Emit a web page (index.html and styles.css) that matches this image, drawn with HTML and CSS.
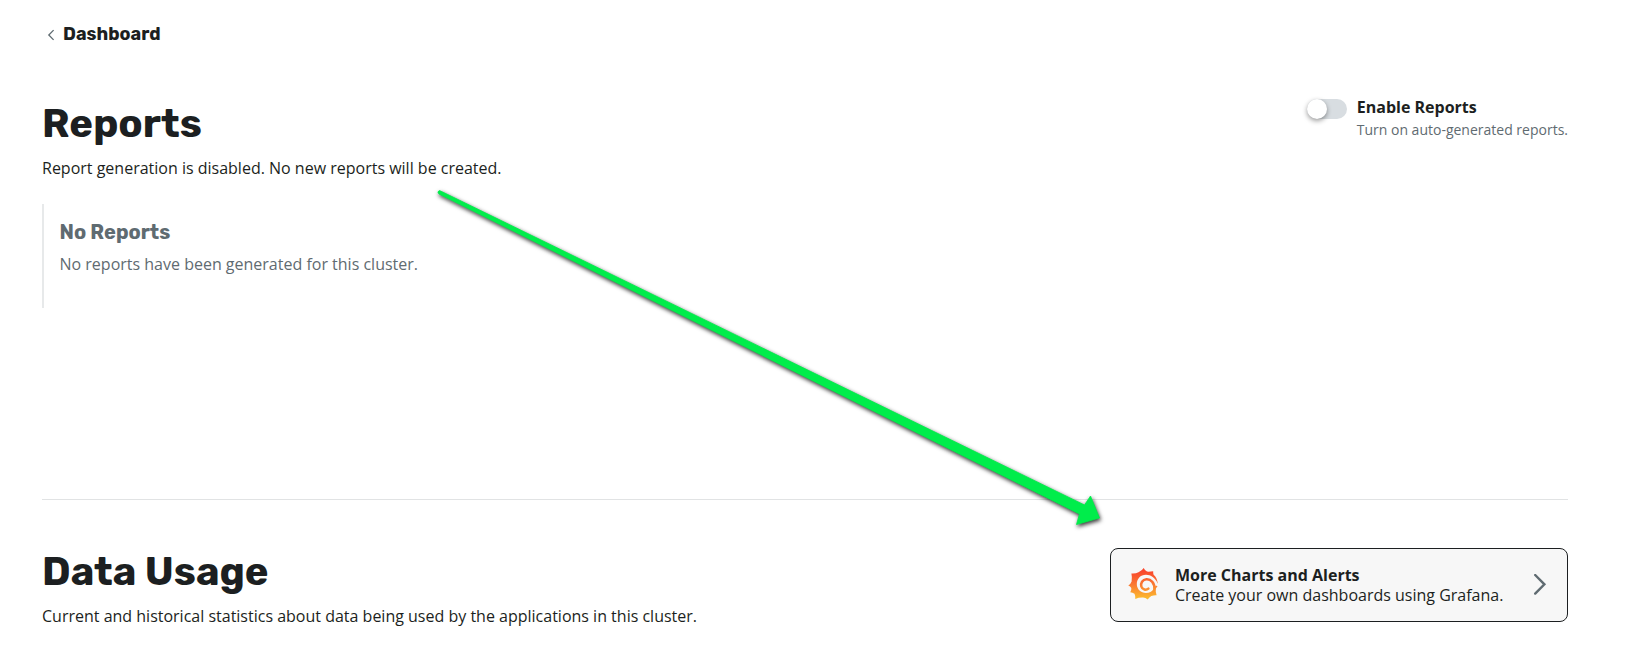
FILE: index.html
```html
<!DOCTYPE html>
<html lang="en">
<head>
<meta charset="utf-8">
<title>Reports</title>
<link rel="stylesheet" href="styles.css">
</head>
<body>
<main class="page">
  <nav class="back">
    <svg class="back-icon" width="8" height="12" viewBox="0 0 8 12"><path d="M6.6 1.1 1.8 6 6.6 10.9"/></svg>
    <a class="back-link">Dashboard</a>
  </nav>
  <section class="reports">
    <header class="row">
      <div>
        <h1 class="title title-reports">Reports</h1>
        <p class="text">Report generation is disabled. No new reports will be created.</p>
      </div>
      <div class="setting">
        <span class="toggle"><span class="knob"></span></span>
        <div>
          <div class="setting-name">Enable Reports</div>
          <div class="setting-help">Turn on auto-generated reports.</div>
        </div>
      </div>
    </header>
    <div class="empty">
      <h2 class="empty-title">No Reports</h2>
      <p class="text">No reports have been generated for this cluster.</p>
    </div>
  </section>
  <section class="usage row">
    <div>
      <h1 class="title">Data Usage</h1>
      <p class="text">Current and historical statistics about data being used by the applications in this cluster.</p>
    </div>
    <a class="card">
      <svg class="grafana" width="32" height="34" viewBox="0 0 32 34">
        <defs><linearGradient id="flame" gradientUnits="userSpaceOnUse" x1="0" y1="1" x2="0" y2="33"><stop offset="0.1" stop-color="#f9472d"/><stop offset="0.5" stop-color="#fa7732"/><stop offset="1" stop-color="#fcc22d"/></linearGradient></defs>
        <path fill="url(#flame)" d="M16.7 1Q18 3.8 20 4.6 22.5 4.8 26.2 4.3 26 6.2 26.6 7.8 30 10.5 30.7 16L28.6 17.5Q29 18.8 30.6 19.5 29 20.5 28.6 22.4 28.6 25 29.6 28.2 27 28 24.3 29 22.3 30.2 20.7 32.6 18.5 30.8 16 30.6 12 30.4 8.3 32 8.6 29 7.5 26.8 5.6 25.6 3.3 25.2 4.6 23 4.3 20.9 3.4 19.2 1.3 18.4 4 16.6 4.6 14.5 5.3 10 4.4 6.4 8.5 6.8 11.5 5.2 15 3.8 16.7 1Z"/>
        <path fill="#f7f7f7" d="M30.6 16.2C28.3 10.8 23.8 7.7 19 7.7C13.3 7.7 9.8 12 9.8 17C9.8 22.2 14 26 18.9 26C22.5 26 25 24.5 26.6 22L28.8 18.6Z"/>
        <path class="swirl" d="M27.4 22.8C28 16 23.8 12 19.5 12.2C15.3 12.5 13.5 16.4 14.3 19.4C15.3 22.8 19.2 23.6 21.4 21.6"/>
      </svg>
      <div class="card-text">
        <div class="card-title">More Charts and Alerts</div>
        <div>Create your own dashboards using Grafana.</div>
      </div>
      <svg class="card-chevron" width="14" height="22" viewBox="0 0 14 22"><path d="M2.2 1 11.4 10.3 2.2 19.6"/></svg>
    </a>
  </section>
</main>
<svg class="pointer" width="1639" height="661" viewBox="0 0 1639 661">
  <path d="M439.5 190.5Q436.5 191.5 439 194L1079.5 514 1076.5 524.5 1099.5 518 1090.5 496 1084.5 505Z"/>
</svg>
</body>
</html>
```
FILE: styles.css
```css
* { box-sizing: border-box; }
body { margin: 0; background: #fff; color: #1c1f21; font: 16px/24px "Open Sans", sans-serif; overflow: hidden; }
h1, h2, p { margin: 0; }
.page { width: 1526px; margin-left: 42px; padding-top: 22px; }
.back { display: flex; align-items: center; gap: 8px; height: 24px; padding-left: 5px; }
.back-icon { fill: none; stroke: #5f6b71; stroke-width: 1.3; margin-top: 2px; }
.back-link { font: 700 18px/24px Rubik, Roboto, sans-serif; }
.row { display: flex; justify-content: space-between; align-items: flex-start; }
.reports { height: 454px; padding-top: 52px; border-bottom: 1px solid #e1e3e4; }
.title { font: 700 40px/48px Rubik, Roboto, sans-serif; margin-bottom: 8px; }
.title-reports { padding-top: 2px; }
.setting { display: flex; gap: 10px; }
.toggle { width: 40px; height: 20px; border-radius: 10px; background: #d8dde1; margin-top: 1px; }
.knob { display: block; width: 20px; height: 20px; border-radius: 50%; background: #fff; box-shadow: 0 2px 5px rgba(0, 0, 0, .4); }
.setting-name, .card-title { font-weight: 700; }
.setting-name { line-height: 18px; margin-bottom: 2px; }
.setting-help { font-size: 14px; line-height: 24px; color: #5f6b71; }
.empty { height: 104px; margin-top: 24px; padding: 16px 0 0 15.5px; border-left: 2px solid #e7e9ea; color: #5f6b71; }
.empty-title { font: 700 20px/24px Rubik, Roboto, sans-serif; margin-bottom: 8px; }
.usage { padding-top: 48px; }
.card { display: flex; align-items: center; width: 458px; height: 74px; padding: 0 20px 0 16px; border: 1px solid #1c1f21; border-radius: 8px; background: #f7f7f7; line-height: 20px; }
.grafana { margin-top: -2px; }
.swirl { fill: none; stroke: url(#flame); stroke-width: 2.5; stroke-linecap: round; }
.card-text { flex: 1; margin-left: 16px; }
.card-chevron { fill: none; stroke: #5f6b71; stroke-width: 2.4; stroke-linecap: round; }
.pointer { position: absolute; top: 0; left: 0; fill: #00ed4b; stroke: #00ed4b; stroke-width: 0.8; stroke-linejoin: round; filter: drop-shadow(1px 2px 2px rgba(0, 0, 0, .8)); pointer-events: none; }
```
